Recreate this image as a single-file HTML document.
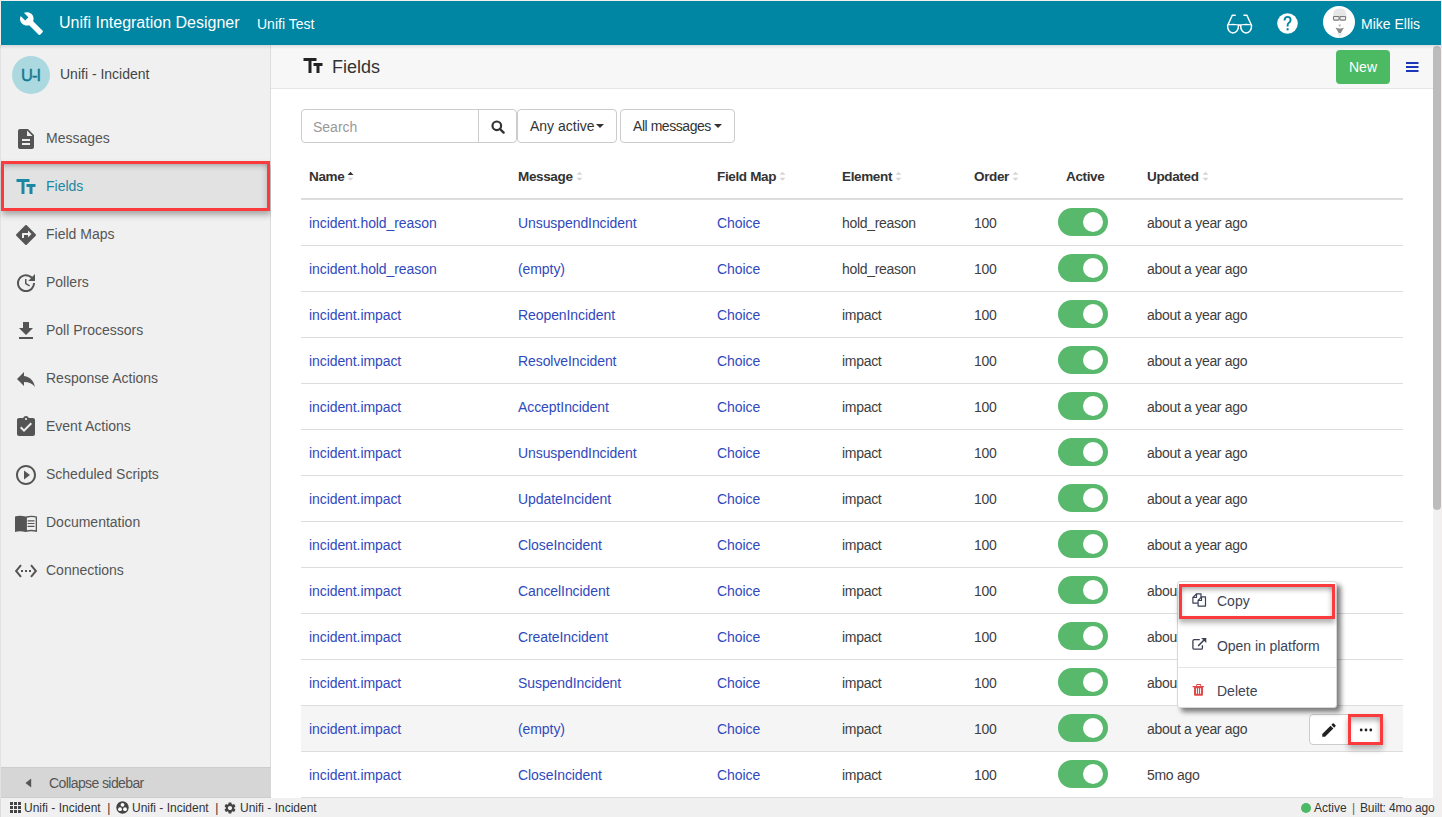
<!DOCTYPE html>
<html><head><meta charset="utf-8">
<style>
*{box-sizing:border-box;margin:0;padding:0}
html,body{width:1442px;height:817px;overflow:hidden;background:#f3efef;font-family:"Liberation Sans",sans-serif;color:#333}
.abs{position:absolute}
#top{position:absolute;left:1px;top:1px;width:1440px;height:44px;background:#0085a3;color:#fff}
#side{position:absolute;left:0;top:45px;width:271px;height:753px;background:#f0f0f0;border-right:1px solid #dcdcdc;border-left:1px solid #e2e2e2}
#main{position:absolute;left:271px;top:45px;width:1162px;height:753px;background:#fff;overflow:hidden}
#phead{position:absolute;left:0;top:0;width:1162px;height:44px;background:#f7f7f7;border-bottom:1px solid #e6e6e6}
#sb{position:absolute;left:1433px;top:45px;width:8px;height:753px;background:#f1f1f1;border-radius:0 0 4px 4px}
#thumb{position:absolute;left:0;top:1px;width:8px;height:464px;background:#bcbcbc;border-radius:4px}
#status{position:absolute;left:0;top:798px;width:1441px;height:19px;background:#f0f0f0;border-left:1px solid #dcdcdc;font-size:12px;color:#333}
.shadow{position:absolute;left:0;top:45px;width:1442px;height:4px;background:linear-gradient(rgba(0,0,0,.10),rgba(0,0,0,0))}
.nav{position:absolute;left:0;width:269px;height:48px;font-size:14px;color:#555}
.nav .ic{position:absolute;left:16px;top:14px;width:20px;height:20px}
.nav .tx{position:absolute;left:45px;top:0;line-height:48px}
.red{position:absolute;border:3px solid #f93b3e}
.st{top:1px;line-height:19px;font-size:12px;color:#333;white-space:nowrap}
table{border-collapse:collapse}
.row{position:absolute;left:30px;width:1102px;height:46px;border-bottom:1px solid #ddd;font-size:14px;color:#404040}
.row span{position:absolute;top:1px;line-height:45px;white-space:nowrap;font-size:14px;letter-spacing:-0.3px}
.th{font-size:13.5px;font-weight:bold;line-height:20px;color:#333;white-space:nowrap;letter-spacing:-0.35px}
.srt{position:relative;display:inline-block;width:7px;height:10px;margin-left:3px;vertical-align:-1px}
.row span.lnk{color:#3049bd;letter-spacing:-0.08px}
.tog{position:absolute;left:757px;top:8px;width:50px;height:28px;border-radius:14px;background:#58b86c}
.tog:after{content:"";position:absolute;left:25px;top:4px;width:20px;height:20px;border-radius:50%;background:#fff}
</style></head><body>
<div id="top">
  <svg class="abs" style="left:18px;top:10px" width="25" height="25" viewBox="0 0 24 24"><path fill="#fff" d="M22.7 19l-9.1-9.1c.9-2.3.4-5-1.5-6.9-2-2-5-2.4-7.4-1.3L9 6 6 9 1.6 4.7C.4 7.1.9 10.1 2.9 12.1c1.9 1.9 4.6 2.4 6.9 1.5l9.1 9.1c.4.4 1 .4 1.4 0l2.3-2.3c.5-.4.5-1.1.1-1.4z"/></svg>
  <span class="abs" style="left:58px;top:0;line-height:44px;font-size:16px">Unifi Integration Designer</span>
  <span class="abs" style="left:256px;top:1px;line-height:44px;font-size:14px">Unifi Test</span>
  <svg class="abs" style="left:1225px;top:11.5px" width="27" height="21" viewBox="0 0 27 21"><g fill="none" stroke="#fff" stroke-width="1.5" stroke-linejoin="round" stroke-linecap="round"><path d="M1.6 12.2C1.6 11.2 12.5 11.2 12.5 12.2C12.6 17 10.2 19.9 7 19.9C3.8 19.9 1.4 17 1.6 12.2Z"/><path d="M14.7 12.2C14.7 11.2 25.6 11.2 25.6 12.2C25.7 17 23.3 19.9 20.1 19.9C16.9 19.9 14.5 17 14.7 12.2Z"/><path d="M12.5 12.3Q13.6 11.9 14.7 12.3M2 11.8L6.3 2.2H9.2M25.2 11.8L20.9 2.2H18"/></g></svg>
  <svg class="abs" style="left:1276px;top:12px" width="21" height="21" viewBox="0 0 21 21"><circle cx="10.5" cy="10.5" r="10.3" fill="#fff"/><path d="M7.5 7.4Q7.5 3.9 10.6 3.9Q13.6 3.9 13.6 6.9Q13.6 8.6 11.9 9.7Q10.6 10.6 10.6 12.4V13.4" fill="none" stroke="#0085a3" stroke-width="1.9"/><rect x="9.6" y="15.2" width="2" height="2.2" fill="#0085a3"/></svg>
  <div class="abs" style="left:1322px;top:5px;width:32px;height:32px;border-radius:50%;background:#fff;overflow:hidden">
    <svg width="32" height="32" viewBox="0 0 32 32"><path d="M10 12C10 4 12 2.5 17 2.5S23.5 5 23.5 12z" fill="#e6e6e6"/><rect x="10.5" y="10.5" width="5.6" height="3.6" rx="0.8" fill="#eee" stroke="#7a7a7a" stroke-width="1.1"/><rect x="17" y="10.5" width="5.6" height="3.6" rx="0.8" fill="#eee" stroke="#7a7a7a" stroke-width="1.1"/><path d="M15.5 18.5h2.5l-.5 2h-1.5z" fill="#bbb"/><path d="M12.5 21.5Q16.8 23.5 21 21.5L17.5 27.5H16z" fill="#8a8a8a"/><path d="M14 27l2.8 5 2.8-5z" fill="#eaeaea"/></svg>
  </div>
  <span class="abs" style="left:1360px;top:1px;line-height:44px;font-size:14px">Mike Ellis</span>
</div>
<div id="side">
  <div class="abs" style="left:11px;top:11px;width:38px;height:38px;border-radius:50%;background:#acd8e0;color:#0e7a96;font-size:16.5px;line-height:38px;text-align:center;letter-spacing:-1px;-webkit-text-stroke:0.4px #0e7a96;padding-right:1px">U-I</div>
  <span class="abs" style="left:59px;top:14px;line-height:30px;font-size:14px;color:#444">Unifi - Incident</span>
  <div class="abs" style="left:0;top:116px;width:269px;height:50px;background:#e2e2e2;box-shadow:inset 0 8px 6px -4px rgba(0,0,0,.32), inset -7px 0 6px -4px rgba(0,0,0,.2)"></div>
  <svg class="abs" style="left:13px;top:82px" width="24" height="24" viewBox="0 0 24 24"><path fill="#555" d="M14 2H6c-1.1 0-1.99.9-1.99 2L4 20c0 1.1.89 2 1.99 2H18c1.1 0 2-.9 2-2V8l-6-6zm2 16H8v-2h8v2zm0-4H8v-2h8v2zm-3-5V3.5L18.5 9H13z"/></svg>
  <span class="abs" style="left:45px;top:69px;line-height:48px;font-size:14px;color:#555">Messages</span>
  <svg class="abs" style="left:13px;top:130px" width="24" height="24" viewBox="0 0 24 24"><path fill="#1a87a3" d="M2.5 4v3h5v12h3V7h5V4h-13zm19 5h-9v3h3v7h3v-7h3V9z"/></svg>
  <span class="abs" style="left:45px;top:117px;line-height:48px;font-size:14px;color:#1a87a3">Fields</span>
  <svg class="abs" style="left:13px;top:178px" width="24" height="24" viewBox="0 0 24 24"><path fill="#555" d="M21.71 11.29l-9-9c-.39-.39-1.02-.39-1.41 0l-9 9c-.39.39-.39 1.02 0 1.41l9 9c.39.39 1.02.39 1.41 0l9-9c.39-.38.39-1.01 0-1.41zM14 14.5V12h-4v3H8v-4c0-.55.45-1 1-1h5V7.5l3.5 3.5-3.5 3.5z"/></svg>
  <span class="abs" style="left:45px;top:165px;line-height:48px;font-size:14px;color:#555">Field Maps</span>
  <svg class="abs" style="left:13px;top:226px" width="24" height="24" viewBox="0 0 24 24"><path fill="#555" d="M21 10.12h-6.78l2.74-2.82c-2.73-2.7-7.15-2.8-9.88-.1-2.73 2.71-2.73 7.08 0 9.790s7.15 2.71 9.88 0C18.32 15.650 19 14.080 19 12.100h2c0 1.98-.88 4.55-2.64 6.29-3.51 3.48-9.21 3.48-12.72 0-3.5-3.47-3.53-9.11-.02-12.58s9.14-3.47 12.65 0L21 3v7.12zM12.5 8v4.25l3.5 2.08-.72 1.21L11 13V8h1.5z"/></svg>
  <span class="abs" style="left:45px;top:213px;line-height:48px;font-size:14px;color:#555">Pollers</span>
  <svg class="abs" style="left:13px;top:274px" width="24" height="24" viewBox="0 0 24 24"><path fill="#555" d="M19 9h-4V3H9v6H5l7 7 7-7zM5 18v2h14v-2H5z"/></svg>
  <span class="abs" style="left:45px;top:261px;line-height:48px;font-size:14px;color:#555">Poll Processors</span>
  <svg class="abs" style="left:13px;top:322px" width="24" height="24" viewBox="0 0 24 24"><path fill="#555" d="M10 9V5l-7 7 7 7v-4.1c5 0 8.5 1.6 11 5.1-1-5-4-10-11-11z"/></svg>
  <span class="abs" style="left:45px;top:309px;line-height:48px;font-size:14px;color:#555">Response Actions</span>
  <svg class="abs" style="left:13px;top:370px" width="24" height="24" viewBox="0 0 24 24"><path fill="#555" d="M19 3h-4.18C14.4 1.840 13.3 1 12 1c-1.3 0-2.4.84-2.82 2H5c-1.1 0-2 .9-2 2v14c0 1.1.9 2 2 2h14c1.1 0 2-.9 2-2V5c0-1.1-.9-2-2-2zm-7 0c.55 0 1 .45 1 1s-.45 1-1 1-1-.45-1-1 .45-1 1-1zm-2 14l-4-4 1.41-1.41L10 14.17l6.59-6.59L18 9l-8 8z"/></svg>
  <span class="abs" style="left:45px;top:357px;line-height:48px;font-size:14px;color:#555">Event Actions</span>
  <svg class="abs" style="left:13px;top:418px" width="24" height="24" viewBox="0 0 24 24"><path fill="#555" d="M10 16.5l6-4.5-6-4.5v9zM12 2C6.48 2 2 6.48 2 12s4.48 10 10 10 10-4.48 10-10S17.52 2 12 2zm0 18c-4.41 0-8-3.590-8-8s3.59-8 8-8 8 3.59 8 8-3.59 8-8 8z"/></svg>
  <span class="abs" style="left:45px;top:405px;line-height:48px;font-size:14px;color:#555">Scheduled Scripts</span>
  <svg class="abs" style="left:13px;top:466px" width="24" height="24" viewBox="0 0 24 24"><path fill="#555" fill-rule="evenodd" d="M1 5.4Q6 3.9 11.6 5.6V21Q6 19.6 1 20.9zM11.6 5.6Q17 3.9 23 5.4V20.9Q17 19.6 11.6 21zM12.9 6.7V19.3Q17.2 18.2 21.7 19.3V6.4Q17.2 5.3 12.9 6.7zM13.6 9.2h6.9v1.2h-6.9zm0 2.7h6.9v1.2h-6.9zm0 2.8h6.9v1.2h-6.9z"/></svg>
  <span class="abs" style="left:45px;top:453px;line-height:48px;font-size:14px;color:#555">Documentation</span>
  <svg class="abs" style="left:13px;top:514px" width="24" height="24" viewBox="0 0 24 24"><path fill="#555" d="M7.77 6.76L6.23 5.48.82 12l5.41 6.52 1.54-1.28L3.42 12l4.35-5.24zM7 13h2v-2H7v2zm10-2h-2v2h2v-2zm-6 2h2v-2h-2v2zm6.77-7.52l-1.54 1.28L20.58 12l-4.350 5.24 1.54 1.28L23.18 12l-5.41-6.52z"/></svg>
  <span class="abs" style="left:45px;top:501px;line-height:48px;font-size:14px;color:#555">Connections</span>
  <div class="red" style="left:0;top:116px;width:269px;height:50px;box-shadow:1px 4px 6px rgba(0,0,0,.3)"></div>
  <div class="abs" style="left:0;top:722px;width:270px;height:31px;background:#d6d6d6;border-top:1px solid #cdcdcd;border-bottom:1px solid #cdcdcd"><svg class="abs" style="left:24px;top:10px" width="7" height="10" viewBox="0 0 7 10"><path d="M6.2 0.5L0.5 5l5.7 4.5z" fill="#555"/></svg><span class="abs" style="left:48px;top:1px;line-height:29px;font-size:14px;color:#555;letter-spacing:-0.6px">Collapse sidebar</span></div>
</div>
<div id="main">
  <div id="phead">
    <svg class="abs" style="left:30px;top:9px" width="24" height="24" viewBox="0 0 24 24"><path fill="#222" d="M2.5 4v3h5v12h3V7h5V4h-13zm19 5h-9v3h3v7h3v-7h3V9z"/></svg>
    <span class="abs" style="left:61px;top:1px;line-height:43px;font-size:18px;color:#333">Fields</span>
    <div class="abs" style="left:1065px;top:5px;width:54px;height:34px;border-radius:4px;background:#4cb963;color:#fff;font-size:14px;line-height:34px;text-align:center">New</div>
    <svg class="abs" style="left:1135px;top:16px" width="13" height="12" viewBox="0 0 13 12"><path d="M0 1.9h12.5M0 6h12.5M0 10.1h12.5" stroke="#1d36b8" stroke-width="2"/></svg>
  </div>
  <div class="abs" style="left:30px;top:64px;width:216px;height:34px;border:1px solid #ccc;border-radius:4px;background:#fff">
    <span class="abs" style="left:11px;top:1px;line-height:32px;font-size:14px;color:#999">Search</span>
    <div class="abs" style="left:176px;top:-1px;width:1px;height:34px;background:#ccc"></div>
    <svg class="abs" style="left:189px;top:10px" width="14" height="14" viewBox="0 0 14 14"><circle cx="5.8" cy="5.8" r="4.3" fill="none" stroke="#333" stroke-width="2.2"/><path d="M9 9l3.6 3.6" stroke="#333" stroke-width="2.4" stroke-linecap="round"/></svg>
  </div>
  <div class="abs" style="left:246px;top:64px;width:100px;height:34px;border:1px solid #ccc;border-radius:4px;background:#fff">
    <span class="abs" style="left:12px;top:0;line-height:32px;font-size:14px;color:#333">Any active</span>
    <svg class="abs" style="left:78px;top:14px" width="8" height="4" viewBox="0 0 8 4"><path d="M0 0h8L4 4z" fill="#333"/></svg>
  </div>
  <div class="abs" style="left:349px;top:64px;width:115px;height:34px;border:1px solid #ccc;border-radius:4px;background:#fff">
    <span class="abs" style="left:12px;top:0;line-height:32px;font-size:14px;color:#333;letter-spacing:-0.45px">All messages</span>
    <svg class="abs" style="left:93px;top:14px" width="8" height="4" viewBox="0 0 8 4"><path d="M0 0h8L4 4z" fill="#333"/></svg>
  </div>
  <div class="abs" style="left:30px;top:153px;width:1102px;height:2px;background:#ddd"></div>
  <span class="abs th" style="left:38px;top:122px">Name<i class="srt"><svg width="7" height="10" viewBox="0 0 7 10" style="position:absolute;top:-1px"><path d="M0.5 4L3.5 0.8 6.5 4z" fill="#333"/><path d="M0.5 6.8L3.5 9.8 6.5 6.8z" fill="#d5d5d5"/></svg></i></span>
  <span class="abs th" style="left:247px;top:122px">Message<i class="srt"><svg width="7" height="10" viewBox="0 0 7 10" style="position:absolute;top:-1px"><path d="M0.5 3.8L3.5 0.8 6.5 3.8z" fill="#d5d5d5"/><path d="M0.5 6.8L3.5 9.8 6.5 6.8z" fill="#d5d5d5"/></svg></i></span>
  <span class="abs th" style="left:446px;top:122px">Field Map<i class="srt"><svg width="7" height="10" viewBox="0 0 7 10" style="position:absolute;top:-1px"><path d="M0.5 3.8L3.5 0.8 6.5 3.8z" fill="#d5d5d5"/><path d="M0.5 6.8L3.5 9.8 6.5 6.8z" fill="#d5d5d5"/></svg></i></span>
  <span class="abs th" style="left:571px;top:122px">Element<i class="srt"><svg width="7" height="10" viewBox="0 0 7 10" style="position:absolute;top:-1px"><path d="M0.5 3.8L3.5 0.8 6.5 3.8z" fill="#d5d5d5"/><path d="M0.5 6.8L3.5 9.8 6.5 6.8z" fill="#d5d5d5"/></svg></i></span>
  <span class="abs th" style="left:703px;top:122px">Order<i class="srt"><svg width="7" height="10" viewBox="0 0 7 10" style="position:absolute;top:-1px"><path d="M0.5 3.8L3.5 0.8 6.5 3.8z" fill="#d5d5d5"/><path d="M0.5 6.8L3.5 9.8 6.5 6.8z" fill="#d5d5d5"/></svg></i></span>
  <span class="abs th" style="left:795px;top:122px">Active</span>
  <span class="abs th" style="left:876px;top:122px">Updated<i class="srt"><svg width="7" height="10" viewBox="0 0 7 10" style="position:absolute;top:-1px"><path d="M0.5 3.8L3.5 0.8 6.5 3.8z" fill="#d5d5d5"/><path d="M0.5 6.8L3.5 9.8 6.5 6.8z" fill="#d5d5d5"/></svg></i></span>
  <div class="row" style="top:155px;"><span class="lnk" style="left:8px">incident.hold_reason</span><span class="lnk" style="left:217px">UnsuspendIncident</span><span class="lnk" style="left:416px">Choice</span><span style="left:541px">hold_reason</span><span style="left:673px">100</span><div class="tog"></div><span style="left:846px">about a year ago</span></div>
  <div class="row" style="top:201px;"><span class="lnk" style="left:8px">incident.hold_reason</span><span class="lnk" style="left:217px">(empty)</span><span class="lnk" style="left:416px">Choice</span><span style="left:541px">hold_reason</span><span style="left:673px">100</span><div class="tog"></div><span style="left:846px">about a year ago</span></div>
  <div class="row" style="top:247px;"><span class="lnk" style="left:8px">incident.impact</span><span class="lnk" style="left:217px">ReopenIncident</span><span class="lnk" style="left:416px">Choice</span><span style="left:541px">impact</span><span style="left:673px">100</span><div class="tog"></div><span style="left:846px">about a year ago</span></div>
  <div class="row" style="top:293px;"><span class="lnk" style="left:8px">incident.impact</span><span class="lnk" style="left:217px">ResolveIncident</span><span class="lnk" style="left:416px">Choice</span><span style="left:541px">impact</span><span style="left:673px">100</span><div class="tog"></div><span style="left:846px">about a year ago</span></div>
  <div class="row" style="top:339px;"><span class="lnk" style="left:8px">incident.impact</span><span class="lnk" style="left:217px">AcceptIncident</span><span class="lnk" style="left:416px">Choice</span><span style="left:541px">impact</span><span style="left:673px">100</span><div class="tog"></div><span style="left:846px">about a year ago</span></div>
  <div class="row" style="top:385px;"><span class="lnk" style="left:8px">incident.impact</span><span class="lnk" style="left:217px">UnsuspendIncident</span><span class="lnk" style="left:416px">Choice</span><span style="left:541px">impact</span><span style="left:673px">100</span><div class="tog"></div><span style="left:846px">about a year ago</span></div>
  <div class="row" style="top:431px;"><span class="lnk" style="left:8px">incident.impact</span><span class="lnk" style="left:217px">UpdateIncident</span><span class="lnk" style="left:416px">Choice</span><span style="left:541px">impact</span><span style="left:673px">100</span><div class="tog"></div><span style="left:846px">about a year ago</span></div>
  <div class="row" style="top:477px;"><span class="lnk" style="left:8px">incident.impact</span><span class="lnk" style="left:217px">CloseIncident</span><span class="lnk" style="left:416px">Choice</span><span style="left:541px">impact</span><span style="left:673px">100</span><div class="tog"></div><span style="left:846px">about a year ago</span></div>
  <div class="row" style="top:523px;"><span class="lnk" style="left:8px">incident.impact</span><span class="lnk" style="left:217px">CancelIncident</span><span class="lnk" style="left:416px">Choice</span><span style="left:541px">impact</span><span style="left:673px">100</span><div class="tog"></div><span style="left:846px">about a year ago</span></div>
  <div class="row" style="top:569px;"><span class="lnk" style="left:8px">incident.impact</span><span class="lnk" style="left:217px">CreateIncident</span><span class="lnk" style="left:416px">Choice</span><span style="left:541px">impact</span><span style="left:673px">100</span><div class="tog"></div><span style="left:846px">about a year ago</span></div>
  <div class="row" style="top:615px;"><span class="lnk" style="left:8px">incident.impact</span><span class="lnk" style="left:217px">SuspendIncident</span><span class="lnk" style="left:416px">Choice</span><span style="left:541px">impact</span><span style="left:673px">100</span><div class="tog"></div><span style="left:846px">about a year ago</span></div>
  <div class="row" style="top:661px;background:#f5f5f5;"><span class="lnk" style="left:8px">incident.impact</span><span class="lnk" style="left:217px">(empty)</span><span class="lnk" style="left:416px">Choice</span><span style="left:541px">impact</span><span style="left:673px">100</span><div class="tog"></div><span style="left:846px">about a year ago</span></div>
  <div class="row" style="top:707px;"><span class="lnk" style="left:8px">incident.impact</span><span class="lnk" style="left:217px">CloseIncident</span><span class="lnk" style="left:416px">Choice</span><span style="left:541px">impact</span><span style="left:673px">100</span><div class="tog"></div><span style="left:846px">5mo ago</span></div>
</div>

<div class="abs" style="left:1309px;top:714px;width:74px;height:31px;border:1px solid #ccc;border-radius:4px;background:#fff"></div>
<div class="abs" style="left:1348px;top:714px;width:1px;height:31px;background:#ccc"></div>
<svg class="abs" style="left:1320px;top:721px" width="18" height="18" viewBox="0 0 24 24"><path fill="#222" d="M3 17.25V21h3.75L17.81 9.94l-3.75-3.75L3 17.25zM20.71 7.04c.39-.39.39-1.02 0-1.41l-2.34-2.34c-.39-.39-1.02-.39-1.41 0l-1.83 1.83 3.75 3.75 1.83-1.83z"/></svg>
<div class="abs" style="left:1351px;top:717px;width:29px;height:25px;box-shadow:inset 0 6px 5px -2px rgba(0,0,0,.25), inset -4px 0 4px -2px rgba(0,0,0,.12)"></div>
<svg class="abs" style="left:1359px;top:727px" width="14" height="6" viewBox="0 0 14 6"><circle cx="2.2" cy="3" r="1.4" fill="#222"/><circle cx="7" cy="3" r="1.4" fill="#222"/><circle cx="11.8" cy="3" r="1.4" fill="#222"/></svg>
<div class="red" style="left:1348px;top:714px;width:35px;height:31px;box-shadow:0 4px 6px rgba(0,0,0,.28)"></div>
<div id="menu" class="abs" style="left:1177px;top:581px;width:160px;height:127px;background:#fff;border:1px solid #d8d8d8;border-radius:3px;box-shadow:4px 4px 5px rgba(0,0,0,.5)">
  <div class="abs" style="left:4px;top:5px;width:150px;height:29px;box-shadow:inset 0 6px 5px -3px rgba(0,0,0,.28), inset -4px 0 4px -2px rgba(0,0,0,.15), inset 4px 0 4px -3px rgba(0,0,0,.1)"></div>
  <svg class="abs" style="left:14px;top:11px" width="15" height="15" viewBox="0 0 15 15"><g fill="none" stroke="#3a4055" stroke-width="1.2" stroke-linejoin="round"><path d="M9 4V0.8H4.5L0.9 4.5V10.1H5.8"/><path d="M0.9 4.5H4.5V0.8"/><path d="M9.5 3.8H13.5V13.1H6.1V7.5L9.5 3.8Z" fill="#fff"/><path d="M6.1 7.5H9.5V3.8"/></g></svg>
  <span class="abs" style="left:39px;top:4px;line-height:30px;font-size:14px;color:#3d4457">Copy</span>
  <svg class="abs" style="left:14px;top:55px" width="15" height="14" viewBox="0 0 15 14"><g fill="none" stroke="#3a4055" stroke-width="1.3"><path d="M7.8 2.6H2.3Q0.9 2.6 0.9 4V11Q0.9 12.2 2.3 12.2H9.2Q10.4 12.2 10.4 11V8.2"/><path d="M6.6 8.5L12.3 2.8" stroke-width="1.6" stroke-linecap="round"/></g><path d="M9.2 1H14.3V6Z" fill="#3a4055"/></svg>
  <span class="abs" style="left:39px;top:49px;line-height:30px;font-size:14px;color:#3d4457;letter-spacing:-0.05px">Open in platform</span>
  <div class="abs" style="left:0;top:85px;width:158px;height:1px;background:#e5e5e5"></div>
  <svg class="abs" style="left:14px;top:102px" width="13" height="12" viewBox="0 0 13 12"><path fill="#e04a4a" fill-rule="evenodd" d="M0.6 2H4.2L4.5 0.1H9L9.3 2H11.9V3.2H0.6ZM5.2 1.1L5.1 2H8.4L8.3 1.1ZM2 3.2H11V10.8Q11 11.8 10 11.8H3Q2 11.8 2 10.8ZM4 4.2V9.8H4.9V4.2ZM6 4.2V9.8H6.9V4.2ZM8 4.2V9.8H8.9V4.2Z"/></svg>
  <span class="abs" style="left:39px;top:94px;line-height:30px;font-size:14px;color:#3d4457">Delete</span>
</div>
<div class="red" style="left:1179px;top:584px;width:156px;height:35px;box-shadow:0 4px 5px rgba(0,0,0,.3)"></div>
<div id="sb"><div id="thumb"></div></div>
<div id="status">
  <svg class="abs" style="left:9px;top:4px" width="11" height="11" viewBox="0 0 11 11"><g fill="#444"><rect x="0" y="0" width="3" height="3"/><rect x="4" y="0" width="3" height="3"/><rect x="8" y="0" width="3" height="3"/><rect x="0" y="4" width="3" height="3"/><rect x="4" y="4" width="3" height="3"/><rect x="8" y="4" width="3" height="3"/><rect x="0" y="8" width="3" height="3"/><rect x="4" y="8" width="3" height="3"/><rect x="8" y="8" width="3" height="3"/></g></svg>
  <span class="abs st" style="left:23px">Unifi - Incident&nbsp; |</span>
  <svg class="abs" style="left:115px;top:3px" width="13" height="13" viewBox="0 0 13 13"><circle cx="6.5" cy="6.5" r="6.2" fill="#444"/><circle cx="6.5" cy="3.8" r="1.9" fill="#fff"/><circle cx="4" cy="8.2" r="1.9" fill="#fff"/><circle cx="9" cy="8.2" r="1.9" fill="#fff"/></svg>
  <span class="abs st" style="left:131px">Unifi - Incident&nbsp; |</span>
  <svg class="abs" style="left:222px;top:3px" width="14" height="14" viewBox="0 0 24 24"><path fill="#444" d="M19.14 12.94c.04-.3.06-.61.06-.94 0-.32-.02-.64-.07-.94l2.03-1.58c.18-.14.23-.41.12-.61l-1.92-3.32c-.12-.22-.37-.29-.59-.22l-2.39.96c-.5-.38-1.03-.7-1.62-.94l-.36-2.54c-.04-.24-.24-.41-.48-.41h-3.84c-.24 0-.43.17-.47.41l-.36 2.54c-.59.24-1.13.57-1.62.94l-2.39-.96c-.22-.08-.47 0-.59.22L2.74 8.87c-.12.21-.08.47.12.61l2.03 1.58c-.05.3-.09.63-.09.94s.02.64.07.94l-2.03 1.58c-.18.14-.23.41-.12.61l1.92 3.32c.12.22.37.29.59.22l2.39-.96c.5.38 1.03.7 1.62.94l.36 2.54c.05.24.24.41.48.41h3.84c.24 0 .44-.17.47-.41l.36-2.54c.59-.24 1.13-.56 1.62-.94l2.39.96c.22.08.47 0 .59-.22l1.92-3.32c.12-.22.07-.47-.12-.61l-2.01-1.58zM12 15.6c-1.98 0-3.6-1.62-3.6-3.6s1.62-3.6 3.6-3.6 3.6 1.62 3.6 3.6-1.62 3.6-3.6 3.6z"/></svg>
  <span class="abs st" style="left:239px">Unifi - Incident</span>
  <div class="abs" style="left:1300px;top:5px;width:10px;height:10px;border-radius:50%;background:#4cb963"></div>
  <span class="abs st" style="left:1313px">Active</span><span class="abs st" style="left:1351px;color:#666">|</span><span class="abs st" style="left:1359px;letter-spacing:-0.15px">Built: 4mo ago</span>
</div>
<div class="shadow"></div>
</body></html>
